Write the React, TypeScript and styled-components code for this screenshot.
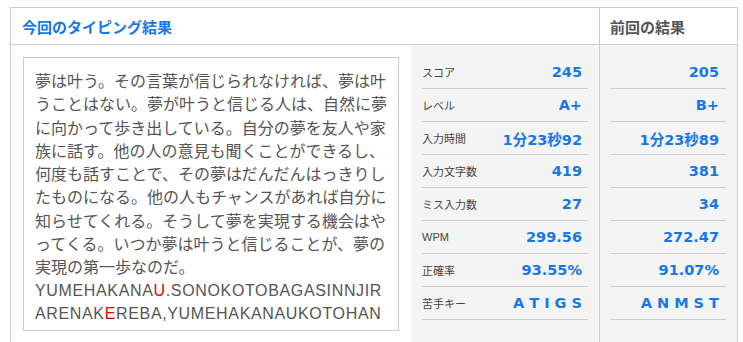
import React from "react";
import styled, { createGlobalStyle } from "styled-components";

const GlobalStyle = createGlobalStyle`
  html, body { margin: 0; padding: 0; background: #fff; }
  body { font-family: "Liberation Sans", "Noto Sans CJK JP", sans-serif; }
`;

const Frame = styled.div`
  margin: 7px 0 0 10px;
  width: 728px;
  box-sizing: border-box;
  border: 1px solid #ccc;
  border-bottom: none;
  display: grid;
  grid-template-columns: 589px 137px;
`;

const HeaderCell = styled.div<{ $current?: boolean }>`
  height: 37px;
  box-sizing: border-box;
  border-bottom: 1px solid #ccc;
  border-right: ${(p) => (p.$current ? "1px solid #ccc" : "none")};
  padding: 0 ${(p) => (p.$current ? "11px" : "10px")};
  display: flex;
  align-items: center;
  font-family: "Noto Sans CJK JP", sans-serif;
  font-weight: 700;
  font-size: 15px;
  color: ${(p) => (p.$current ? "#1777e6" : "#555")};
`;

const CurrentBody = styled.div`
  display: grid;
  grid-template-columns: 400px 188px;
  border-right: 1px solid #ccc;
`;

const TextPane = styled.div`
  padding: 12px;
  background: #fff;
`;

const Passage = styled.div`
  width: 376px;
  height: 274px;
  box-sizing: border-box;
  border: 1px solid #ccc;
  padding: 11px 6px 0 11px;
  overflow: hidden;
  font-family: "Noto Sans CJK JP", sans-serif;
  font-size: 16px;
  line-height: 23.3px;
  color: #555;
`;

const Romaji = styled.div`
  font-family: "Liberation Sans", Arial, sans-serif;
  font-size: 16px;
  letter-spacing: 0.65px;
  line-height: 23.3px;
  word-break: break-all;
`;

const Miss = styled.span`
  color: #e50000;
`;

const StatsPane = styled.div<{ $valuePad: number }>`
  background: #f4f4f4;
  padding: 11px;
  --value-pad: ${(p) => p.$valuePad}px;
`;

const StatRow = styled.div`
  height: 33px;
  box-sizing: border-box;
  border-bottom: 1px solid #ccc;
  display: flex;
  align-items: center;
  justify-content: space-between;
`;

const Label = styled.span`
  font-family: "Liberation Sans", "Noto Sans CJK JP", sans-serif;
  font-size: 11px;
  color: #444;
`;

const Value = styled.span`
  margin-left: auto;
  padding-right: var(--value-pad);
  font-family: "DejaVu Sans", "Noto Sans CJK JP", sans-serif;
  font-weight: 700;
  font-size: 14.5px;
  color: #1777e6;
  white-space: pre;
`;

const labels = ["スコア", "レベル", "入力時間", "入力文字数", "ミス入力数", "WPM", "正確率", "苦手キー"];
const current = ["245", "A+", "1分23秒92", "419", "27", "299.56", "93.55%", "A T I G S"];
const previous = ["205", "B+", "1分23秒89", "381", "34", "272.47", "91.07%", "A N M S T"];

const passage =
  "夢は叶う。その言葉が信じられなければ、夢は叶うことはない。夢が叶うと信じる人は、自然に夢に向かって歩き出している。自分の夢を友人や家族に話す。他の人の意見も聞くことができるし、何度も話すことで、その夢はだんだんはっきりしたものになる。他の人もチャンスがあれば自分に知らせてくれる。そうして夢を実現する機会はやってくる。いつか夢は叶うと信じることが、夢の実現の第一歩なのだ。";

export default function App() {
  return (
    <>
      <GlobalStyle />
      <Frame>
        <HeaderCell $current>今回のタイピング結果</HeaderCell>
        <HeaderCell>前回の結果</HeaderCell>
        <CurrentBody>
          <TextPane>
            <Passage>
              {passage}
              <Romaji>
                YUMEHAKANA<Miss>U</Miss>.SONOKOTOBAGASINNJIRARENAK<Miss>E</Miss>
                REBA,YUMEHAKANAUKOTOHANAI.YUMEGAKANAUTOSINNJIRUHITOHA,SIZENNNIYUMENIMUKATTEARUKIDASITEIRU.
              </Romaji>
            </Passage>
          </TextPane>
          <StatsPane $valuePad={6}>
            {labels.map((l, i) => (
              <StatRow key={l}>
                <Label>{l}</Label>
                <Value>{current[i]}</Value>
              </StatRow>
            ))}
          </StatsPane>
        </CurrentBody>
        <StatsPane $valuePad={7}>
          {previous.map((v, i) => (
            <StatRow key={i}>
              <Value>{v}</Value>
            </StatRow>
          ))}
        </StatsPane>
      </Frame>
    </>
  );
}
